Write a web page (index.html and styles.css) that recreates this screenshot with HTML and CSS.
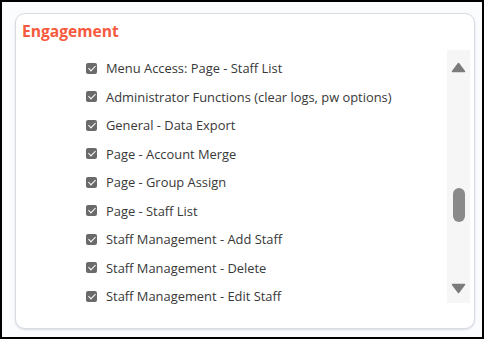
FILE: index.html
```html
<!DOCTYPE html>
<html>

<head>
  <title>Engagement</title>
  <link rel="stylesheet" href="styles.css">
</head>

<body>
  <div class="frame">
    <div class="card">
      <div class="cardTitle">Engagement</div>
      <div class="cardBody">
        <ul class="permList">
          <li class="permItem"><span class="check"></span>Menu Access: Page - Staff List</li>
          <li class="permItem"><span class="check"></span>Administrator Functions (clear logs, pw options)</li>
          <li class="permItem"><span class="check"></span>General - Data Export</li>
          <li class="permItem"><span class="check"></span>Page - Account Merge</li>
          <li class="permItem"><span class="check"></span>Page - Group Assign</li>
          <li class="permItem"><span class="check"></span>Page - Staff List</li>
          <li class="permItem"><span class="check"></span>Staff Management - Add Staff</li>
          <li class="permItem"><span class="check"></span>Staff Management - Delete</li>
          <li class="permItem"><span class="check"></span>Staff Management - Edit Staff</li>
        </ul>
        <div class="scrollBar">
          <svg class="arrow arrowUp" width="15" height="11" viewBox="0 0 15 11">
            <polygon points="7.5,1.5 13.5,9.5 1.5,9.5" />
          </svg>
          <div class="track">
            <div class="thumb"></div>
          </div>
          <svg class="arrow arrowDown" width="15" height="11" viewBox="0 0 15 11">
            <polygon points="1.5,1.5 13.5,1.5 7.5,9.5" />
          </svg>
        </div>
      </div>
    </div>
  </div>
</body>

</html>
```

FILE: styles.css
```css
html, body {
  margin: 0;
  padding: 0;
}

body {
  font-family: 'Open Sans', 'Noto Sans', sans-serif;
  background-color: #fbfcfe;
}

.frame {
  box-sizing: border-box;
  width: 484px;
  height: 339px;
  border: 2px solid #000;
  padding: 11px 7px 8px 13px;
  display: flex;
}

.card {
  flex: 1;
  display: flex;
  flex-direction: column;
  background-color: #fff;
  border: 1px solid #d6dbe4;
  border-radius: 10px;
  box-shadow: 0 1px 2px rgba(120, 130, 150, 0.25);
}

.cardTitle {
  height: 36px;
  box-sizing: border-box;
  padding: 7px 0 0 6px;
  font-size: 15.6px;
  line-height: 20px;
  font-weight: 700;
  color: #f65a3e;
}

.cardBody {
  display: flex;
  height: 253px;
  padding-right: 4px;
}

.permList {
  flex: 1;
  list-style: none;
  margin: 0;
  padding: 4px 0 0 70px;
}

.permItem {
  display: flex;
  align-items: center;
  height: 28.5px;
  font-size: 12.9px;
  color: #383838;
}

.check {
  position: relative;
  width: 11px;
  height: 11px;
  margin-right: 9px;
  border-radius: 2px;
  background-color: #6a6a6a;
}

.check::after {
  content: '';
  position: absolute;
  left: 3.5px;
  top: 1px;
  width: 3px;
  height: 6px;
  border: solid #fff;
  border-width: 0 1.6px 1.6px 0;
  transform: rotate(45deg);
}

.scrollBar {
  width: 23px;
  display: flex;
  flex-direction: column;
  align-items: center;
  background-color: #f6f6f6;
}

.arrow {
  fill: #7b7b7b;
  stroke: #7b7b7b;
  stroke-width: 1.5;
  stroke-linejoin: round;
}

.arrowUp {
  margin-top: 12px;
}

.track {
  flex: 1;
  width: 12px;
}

.thumb {
  margin-top: 115px;
  height: 34px;
  border-radius: 6px;
  background-color: #8a8a8a;
}

.arrowDown {
  margin-bottom: 9px;
}
```
